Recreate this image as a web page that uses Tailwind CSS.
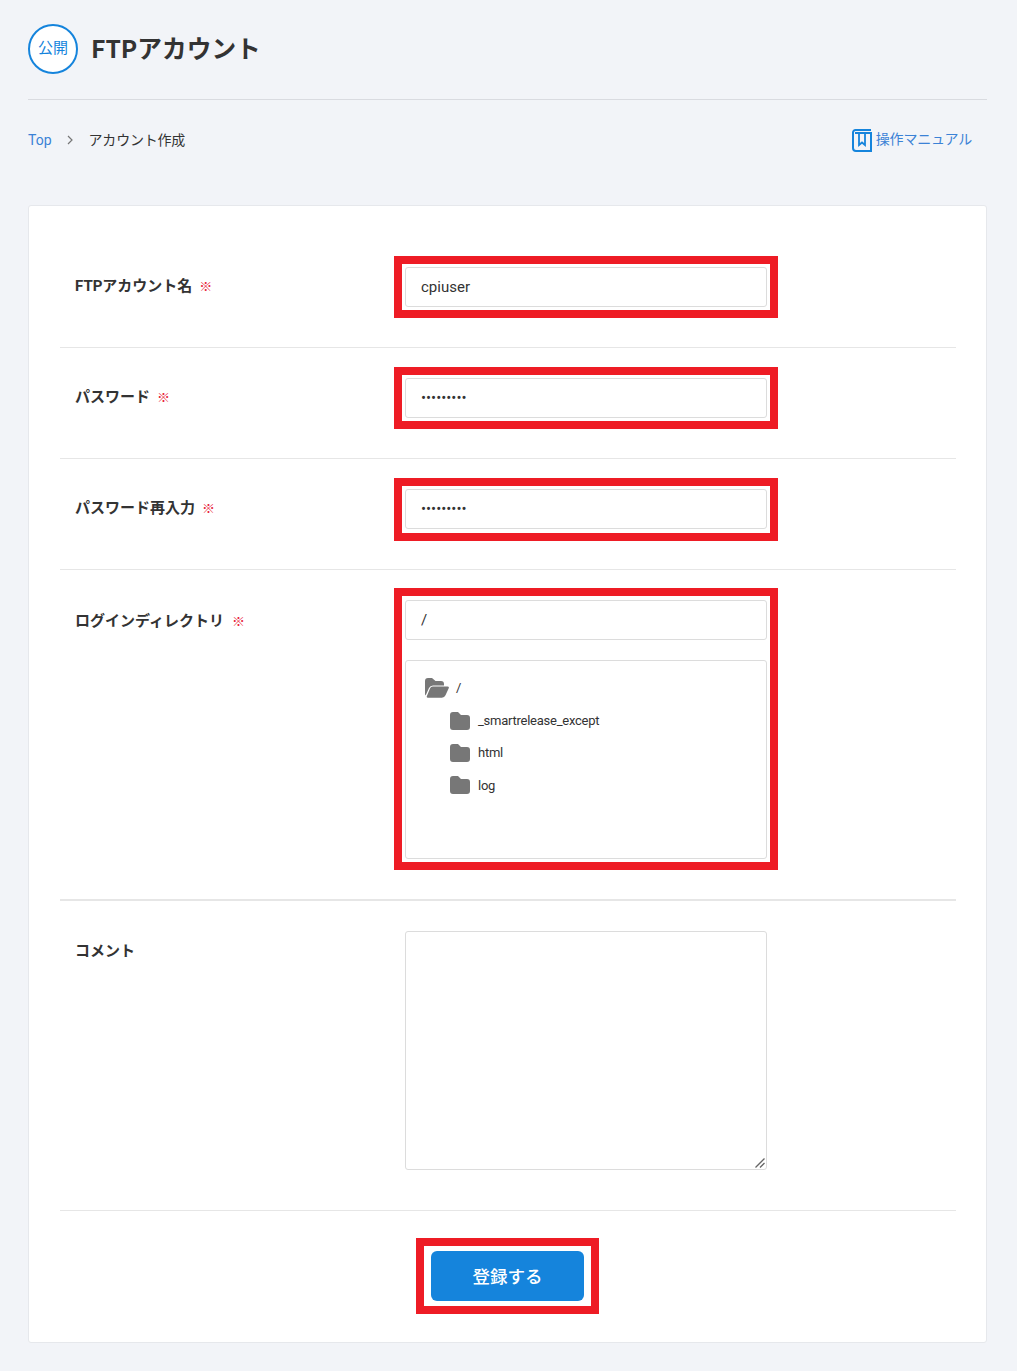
<!DOCTYPE html>
<html lang="ja">
<head>
  <meta charset="UTF-8">
  <title>FTPアカウント</title>
  <script src="https://cdn.jsdelivr.net/npm/@tailwindcss/browser@4"></script>
</head>
<body class="bg-[#f2f4f8] text-[#333] font-['Roboto','Noto_Sans_CJK_JP',sans-serif] text-[14px]">
  <div class="w-[1017px] h-[1371px] pl-[28px] pr-[30px] pt-[24px] overflow-hidden">

    <!-- Title -->
    <div class="flex items-start gap-[13px] h-[76px] border-b border-[#d9dbe0]">
      <div class="w-[50px] h-[50px] rounded-full bg-white border-2 border-[#1584dc] pb-[3px] flex items-center justify-center text-[15px] text-[#1584dc] font-['Noto_Sans_CJK_JP',sans-serif]">公開</div>
      <h1 class="text-[24.7px] font-bold leading-[46px] font-['Noto_Sans_CJK_JP',sans-serif]">FTPアカウント</h1>
    </div>

    <!-- Breadcrumb -->
    <div class="flex items-center justify-between h-[80px] pr-[15px] mb-[25px]">
      <div class="flex items-center">
        <a class="text-[#3b82d6]">Top</a>
        <svg class="w-[8px] h-[10px] ml-[14px] mr-[15px]" viewBox="0 0 8 10" fill="none" stroke="#777" stroke-width="1.2"><path d="M2 1l4 4-4 4"/></svg>
        <span class="tracking-[-0.2px]">アカウント作成</span>
      </div>
      <a class="flex items-center gap-[4px] text-[#3b82d6]">
        <svg class="w-[20px] h-[24px]" viewBox="0 0 20 24" fill="none" stroke="#1584dc" stroke-width="2"><path d="M19 2H3.500A2.500 2.500 0 0 0 1 4.500V20a3 3 0 0 0 3 3h15V5H3"/><path d="M7 6v11l3-2.500 3 2.500V6" stroke-width="1.800"/></svg>
        <span class="relative top-[-1px] tracking-[-0.2px]">操作マニュアル</span>
      </a>
    </div>

    <!-- Form card -->
    <div class="bg-white border border-[#e6e8ec] rounded-[3px] h-[1138px] pl-[31px] pr-[30px] pt-[30px]">

      <div class="flex border-b border-[#e6e6e6] px-[15px] pt-[31px] pb-[40px]">
        <label class="w-[330px] pt-[9px] font-bold text-[15px] leading-[20px]">FTPアカウント名<span class="ml-[7px] text-[13px] font-normal text-[#e8233a]">※</span></label>
        <div class="relative w-[362px]">
          <input type="text" value="cpiuser" class="block w-full h-[40px] px-[15px] bg-white border border-[#dcdcdc] rounded-[3px] text-[15px] text-[#333]">
          <div class="absolute -left-[11px] -top-[11px] w-[384px] h-[62px] border-[8px] border-[#ee1c25]"></div>
        </div>
      </div>

      <div class="flex border-b border-[#e6e6e6] px-[15px] pt-[30px] pb-[40px]">
        <label class="w-[330px] pt-[9px] font-bold text-[15px] leading-[20px]">パスワード<span class="ml-[7px] text-[13px] font-normal text-[#e8233a]">※</span></label>
        <div class="relative w-[362px]">
          <input type="password" value="password1" class="block w-full h-[40px] px-[15px] bg-white border border-[#dcdcdc] rounded-[3px] text-[15px] text-[#333]">
          <div class="absolute -left-[11px] -top-[11px] w-[384px] h-[62px] border-[8px] border-[#ee1c25]"></div>
        </div>
      </div>

      <div class="flex border-b border-[#e6e6e6] px-[15px] pt-[30px] pb-[40px]">
        <label class="w-[330px] pt-[9px] font-bold text-[15px] leading-[20px]">パスワード再入力<span class="ml-[7px] text-[13px] font-normal text-[#e8233a]">※</span></label>
        <div class="relative w-[362px]">
          <input type="password" value="password1" class="block w-full h-[40px] px-[15px] bg-white border border-[#dcdcdc] rounded-[3px] text-[15px] text-[#333]">
          <div class="absolute -left-[11px] -top-[11px] w-[384px] h-[63px] border-[8px] border-[#ee1c25]"></div>
        </div>
      </div>

      <div class="flex border-b-2 border-[#e6e6e6] px-[15px] pt-[30px] pb-[40px]">
        <label class="w-[330px] pt-[11px] font-bold text-[15px] leading-[20px]">ログインディレクトリ<span class="ml-[8px] text-[13px] font-normal text-[#e8233a]">※</span></label>
        <div class="relative w-[362px]">
          <input type="text" value="/" class="block w-full h-[40px] px-[15px] bg-white border border-[#dcdcdc] rounded-[3px] text-[15px] text-[#333]">
          <div class="mt-[20px] h-[199px] border border-[#dcdcdc] rounded-[3px] pl-[19px] pt-[15px] text-[13px] tracking-[-0.25px]">
            <div class="flex items-center h-[23px] gap-[7px]">
              <svg class="w-[24px] h-[20px] fill-[#777]" viewBox="0 0 24 20"><path d="M3 0h4l3.500 3H16a3 3 0 0 1 3 3v1.500H8a4.500 4.500 0 0 0-4 2.500L0.600 17.500A3 3 0 0 1 0 15.500V3a3 3 0 0 1 3-3z"/><path d="M8 8.500h14.500a1.300 1.300 0 0 1 1.200 1.800l-3.200 7a4 4 0 0 1-3.600 2.400H3a1.200 1.200 0 0 1-1.100-1.700L5 10.500a3 3 0 0 1 3-2z"/></svg>
              <span>/</span>
            </div>
            <div class="flex flex-col gap-[10.400px] mt-[10.500px] pl-[25px]">
              <div class="flex items-center h-[22px] gap-[8px]">
                <svg class="w-[20px] h-[18px] fill-[#777]" viewBox="0 0 20 18"><path d="M3 0h5l3 3h6a3 3 0 0 1 3 3v9a3 3 0 0 1-3 3H3a3 3 0 0 1-3-3V3a3 3 0 0 1 3-3z"/></svg>
                <span>_smartrelease_except</span>
              </div>
              <div class="flex items-center h-[22px] gap-[8px]">
                <svg class="w-[20px] h-[18px] fill-[#777]" viewBox="0 0 20 18"><path d="M3 0h5l3 3h6a3 3 0 0 1 3 3v9a3 3 0 0 1-3 3H3a3 3 0 0 1-3-3V3a3 3 0 0 1 3-3z"/></svg>
                <span>html</span>
              </div>
              <div class="flex items-center h-[22px] gap-[8px]">
                <svg class="w-[20px] h-[18px] fill-[#777]" viewBox="0 0 20 18"><path d="M3 0h5l3 3h6a3 3 0 0 1 3 3v9a3 3 0 0 1-3 3H3a3 3 0 0 1-3-3V3a3 3 0 0 1 3-3z"/></svg>
                <span>log</span>
              </div>
            </div>
          </div>
          <div class="absolute -left-[11px] -top-[12px] w-[384px] h-[282px] border-[8px] border-[#ee1c25]"></div>
        </div>
      </div>

      <div class="flex border-b border-[#e6e6e6] px-[15px] pt-[30px] pb-[40px]">
        <label class="w-[330px] pt-[10px] font-bold text-[15px] leading-[20px]">コメント</label>
        <div class="relative w-[362px] h-[239px]">
          <textarea class="block w-full h-full resize-none bg-white border border-[#dcdcdc] rounded-[3px]"></textarea>
          <svg class="absolute right-[2px] bottom-[2px] w-[10px] h-[10px]" viewBox="0 0 10 10" stroke="#666" stroke-width="1.300" fill="none"><path d="M0.500 9.500l9-9M5 9.500l4.500-4.500"/></svg>
        </div>
      </div>

      <div class="flex justify-center pt-[40px] pr-[1px]">
        <div class="relative">
          <button class="block w-[153px] h-[50px] pt-[2px] rounded-[6px] bg-[#1584dc] text-white text-[17.500px] font-medium">登録する</button>
          <div class="absolute -left-[15px] -top-[13px] w-[183px] h-[76px] border-[8px] border-[#ee1c25]"></div>
        </div>
      </div>
    </div>
  </div>
</body>
</html>
